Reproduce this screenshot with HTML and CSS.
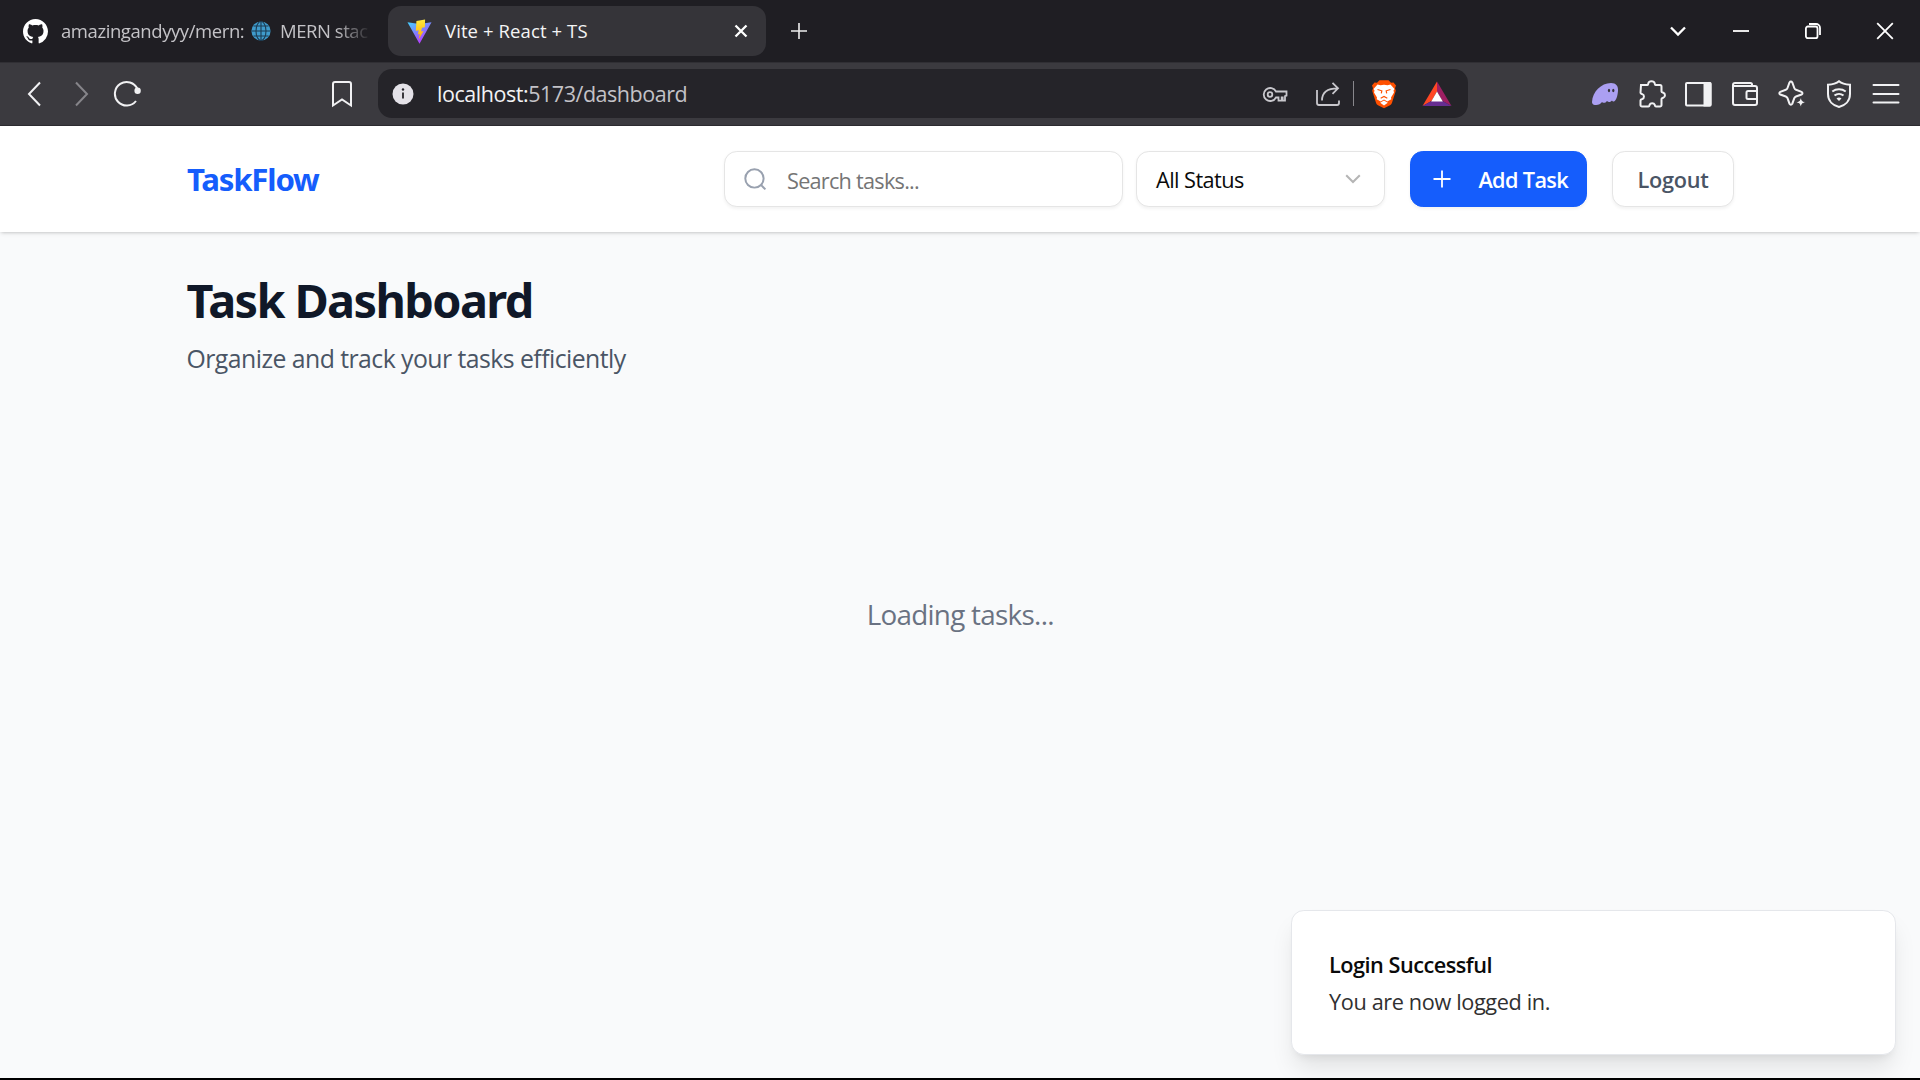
FILE: index.html
```html
<!DOCTYPE html>
<html lang="en">
<head>
<meta charset="utf-8">
<title>Vite + React + TS</title>
<link rel="stylesheet" href="styles.css">
</head>
<body>
<div class="tabs">
  <div class="tab">
    <svg class="tab-icon" viewBox="0 0 16 16"><path fill="#fff" d="M8 0C3.58 0 0 3.58 0 8c0 3.54 2.29 6.53 5.47 7.59.4.07.55-.17.55-.38 0-.19-.01-.82-.01-1.49-2.01.37-2.53-.49-2.69-.94-.09-.23-.48-.94-.82-1.13-.28-.15-.68-.52-.01-.53.63-.01 1.08.58 1.23.82.72 1.21 1.87.87 2.33.66.07-.52.28-.87.51-1.07-1.78-.2-3.64-.89-3.64-3.95 0-.87.31-1.59.82-2.15-.08-.2-.36-1.02.08-2.12 0 0 .67-.21 2.2.82.64-.18 1.32-.27 2-.27s1.36.09 2 .27c1.53-1.04 2.2-.82 2.2-.82.44 1.1.16 1.92.08 2.12.51.56.82 1.27.82 2.15 0 3.07-1.87 3.75-3.65 3.95.29.25.54.73.54 1.48 0 1.07-.01 1.93-.01 2.2 0 .21.15.46.55.38A8.01 8.01 0 0 0 16 8c0-4.42-3.58-8-8-8z"/></svg>
    <div class="tab-title faded"><span class="repo">amazingandyyy/mern:</span>
      <svg class="globe" viewBox="0 0 20 20"><circle cx="10" cy="10" r="9.6" fill="#3f9bcb"/><g fill="none" stroke="#1c3b52" stroke-width="1.1"><path d="M10 .5v19M.5 10h19M2.5 5h15M2.5 15h15"/><ellipse cx="10" cy="10" rx="5" ry="9.5"/></g></svg>
      <span class="mern">MERN stac</span></div>
  </div>
  <div class="tab active">
    <svg class="tab-icon" viewBox="0 0 26 26">
      <defs><linearGradient id="va" x1="0" y1="0" x2=".6" y2="1"><stop offset="0" stop-color="#41d1ff"/><stop offset="1" stop-color="#bd34fe"/></linearGradient><linearGradient id="vb" x1="0" y1="0" x2="0" y2="1"><stop offset="0" stop-color="#ffea3d"/><stop offset="1" stop-color="#ffa800"/></linearGradient></defs>
      <path fill="url(#va)" d="M.5 3.5 13 5.3l12.5-1.8L13 25.7z"/><path fill="url(#vb)" d="M18.8.6 9.8 2.2 9.2 12.5l3-.7-.9 4.4 2-.6-1.2 5.8 5.2-9-2.7.6 1-3.8 3-.7z"/></svg>
    <div class="tab-title vite">Vite + React + TS</div>
    <svg class="tab-close" viewBox="0 0 14 14"><path d="M1.5 1.5l11 11m0-11l-11 11" stroke="#fff" stroke-width="2.3"/></svg>
  </div>
  <svg class="new-tab" viewBox="0 0 18 18"><path d="M9 1v16M1 9h16" stroke="#eee" stroke-width="1.6"/></svg>
  <div class="window-buttons">
    <svg viewBox="0 0 18 18"><path d="M2 5.5 9 12.500l7-7" stroke-width="2.3"/></svg>
    <svg viewBox="0 0 18 18"><path d="M1 9h16" stroke-width="1.8"/></svg>
    <svg viewBox="0 0 18 18"><rect x="1.900" y="4.500" width="11.600" height="11.700" rx="2"/><path d="M5 2h7a4 4 0 0 1 4 4v7"/></svg>
    <svg viewBox="0 0 18 18"><path d="M1.200 1.200l15.600 15.600m0-15.600L1.200 16.800"/></svg>
  </div>
</div>

<div class="toolbar">
  <svg class="tool back" viewBox="0 0 28 28"><path d="M20 2.500 9 14l11 11.500"/></svg>
  <svg class="tool forward" viewBox="0 0 28 28"><path d="M8 2.500 19 14 8 25.500"/></svg>
  <svg class="tool reload" viewBox="0 0 28 28"><path d="M23 21A11.800 11.800 0 1 1 24.500 9"/><circle cx="24.600" cy="10.800" r="3.200" fill="#f1f1f3" stroke="none"/></svg>
  <svg class="tool bookmark" viewBox="0 0 28 28"><path d="M5 4a2 2 0 0 1 2-2h14a2 2 0 0 1 2 2v21.500l-9-6-9 6z"/></svg>
  <div class="url">
    <svg class="info" viewBox="0 0 22 22"><circle cx="11" cy="11" r="10.500" fill="#e4e2e8"/><path d="M11 9.500v6" stroke="#252429" stroke-width="1.800"/><circle cx="11" cy="6.500" r="1.200" fill="#252429"/></svg>
    <div class="address"><span class="host">localhost:</span><span class="path">5173/dashboard</span></div>
    <svg class="key" viewBox="0 0 26 26"><path d="M14 10.500A6.500 6.500 0 1 0 14 16.500h2.500v3.200h3.200v-3.200h1v3.200H23v-4.500l1.500-.5v-4.200z"/><circle cx="8" cy="13.500" r="2.300"/></svg>
    <svg class="share" viewBox="0 0 26 26"><path d="M2 9v13a2 2 0 0 0 2 2h18a2 2 0 0 0 2-2v-2.500M7 19.500C7 11.500 12 7.300 22.500 7.300M17.500 1.800 23 7.300l-5.500 5.500"/></svg>
    <span class="divider"></span>
    <svg class="brave" viewBox="0 0 26 30"><path fill="#ff5000" d="M8.500 1.200h9L20 3.800l2.500-.3 2.500 3-1 2.800.8 2.400-3.800 12c-.4 1.200-1 1.800-2 2.500L13 29.200l-6-3c-1-.7-1.600-1.300-2-2.500l-3.800-12L2 9.300 1 6.500l2.500-3 2.500.3z"/><path fill="#fff" d="m6.500 5.500 3 .8 3.500-.6 3.500.6 3-.8 4 4.500-1 1.500.5 2-3 5 .3 1.700-4 2.300L13 20.500l-3.300 2L5.700 20.200 6 18.500l-3-5 .5-2-1-1.500z"/><path fill="#fff" d="m13 21.500 3.800 2.200L13 26.500l-3.800-2.800z"/><path d="M6.500 10.500l4.300 1.300-.5 2.500M19.500 10.500l-4.300 1.300.5 2.500M9.700 19.300l3.300-1.800 3.300 1.800" fill="none" stroke="#ff5000" stroke-width="1.200"/></svg>
    <svg class="bat" viewBox="0 0 30 26"><path fill="#ff4724" d="M15 .5v10L9.500 20 .500 25z"/><path fill="#9e1f63" d="m15 .5 14.500 24.500-9-5L15 10.500z"/><path fill="#662d91" d="M.5 25l9-5h11l9 5z"/><path fill="#fff" d="m15 10.500 5.800 10H9.200z"/></svg>
  </div>
  <div class="extensions">
    <svg viewBox="0 0 28 28"><path fill="#ab9ff2" stroke="none" d="M1 22C1.500 12 10 3 20 3c5 0 7.500 3 7 8-.4 5-2 10-4 10.500-1 .3-1.500-.4-2-1-1 1.500-3.500 2.300-5 .5-1.500 2-3.500 2.500-5 1-1.500 2-4 3.500-7 3-2-.2-3.100-1.500-3-3z"/><ellipse cx="18" cy="10.500" rx="1.100" ry="1.800" fill="#35343a" stroke="none"/><ellipse cx="22.300" cy="10.500" rx="1.100" ry="1.800" fill="#35343a" stroke="none"/></svg>
    <svg viewBox="0 0 28 28"><path d="M3 5h6.500c.8 0 .6-1 .9-2 .7-2.500 5.500-2.500 6.200 0 .3 1 .1 2 .9 2H22a1.500 1.500 0 0 1 1.500 1.500v5c0 1 1 .9 1.800 1.200 2.200.8 2.200 4.300 0 5-.8.400-1.800.2-1.800 1.300v6A1.500 1.500 0 0 1 22 26.500h-4c-1.200 0-1-.9-1.300-1.800-.8-2-4.300-2-5 0-.3.900-.2 1.800-1.300 1.800H4A1.500 1.500 0 0 1 2.500 25v-4.500c0-1.200 1-1.100 1.800-1.400 2.200-.8 2.200-4.200 0-5-.8-.3-1.800-.2-1.800-1.300z"/></svg>
    <svg viewBox="0 0 28 28"><rect x="2" y="3" width="24.500" height="22.500" rx="1"/><path fill="#f1f1f3" stroke="none" d="M19.500 2H26a1.500 1.500 0 0 1 1.500 1.500V25a1.500 1.500 0 0 1-1.500 1.500h-6.500z"/></svg>
    <svg viewBox="0 0 28 28"><path d="M21 6V4.500A1.500 1.500 0 0 0 19.500 3H4a2 2 0 0 0-2 2v18a2 2 0 0 0 2 2h20a2 2 0 0 0 2-2V8a2 2 0 0 0-2-2H2.500M26 11h-9a1.500 1.500 0 0 0-1.500 1.500v5A1.500 1.500 0 0 0 17 19h9"/></svg>
    <svg viewBox="0 0 28 28"><path d="M11.500 2.500c.8-1.300 2-1.300 2.800 0l2 5.500c.3.900.9 1.500 1.700 1.800l5.500 2c1.300.7 1.300 2 0 2.700l-5.500 2c-.8.300-1.400.9-1.700 1.700l-2 5.500c-.8 1.300-2 1.300-2.800 0l-2-5.500c-.3-.8-.9-1.400-1.700-1.700l-5.500-2c-1.300-.7-1.300-2 0-2.700l5.500-2c.8-.3 1.400-.9 1.700-1.800z"/><path fill="#f1f1f3" stroke="#3b3a3f" stroke-width="1" d="m22.800 17 1.500 3.800 3.500 1.500-3.500 1.500-1.500 3.800-1.500-3.800-3.800-1.500 3.800-1.500z"/></svg>
    <svg viewBox="0 0 28 28"><path d="M14 1.200C11 3.800 7 4.500 3 4.700V14c0 7 5 11.500 11 13 6-1.500 11-6 11-13V4.700C21 4.500 17 3.800 14 1.200z"/><path d="M7.300 11.500a11 11 0 0 1 13.400 0M9.500 15.500a7.200 7.200 0 0 1 9 0"/><path d="M11.500 18.500q2.500-2 5 0L14 21z" fill="#f1f1f3" stroke="none"/></svg>
    <svg viewBox="0 0 28 28"><path d="M1.500 5h25M1.500 14h25M1.500 22.500h25" stroke-linecap="round"/></svg>
  </div>
</div>

<header class="header">
  <div class="brand"><span>TaskFlow</span></div>
  <div class="search box">
    <svg viewBox="0 0 24 24"><circle cx="11" cy="11" r="8.800"/><path d="m21.500 21.500-4.300-4.300"/></svg>
    <span>Search tasks...</span>
  </div>
  <div class="select box">
    <span>All Status</span>
    <svg viewBox="0 0 16 10"><path d="m1.200 1.200 6.800 6.800 6.800-6.800"/></svg>
  </div>
  <div class="add box">
    <svg viewBox="0 0 18 18"><path d="M9 .5v17M.5 9h17"/></svg>
    <span>Add Task</span>
  </div>
  <div class="logout box"><span>Logout</span></div>
</header>

<main class="main">
  <h1><span>Task Dashboard</span></h1>
  <p class="subtitle"><span>Organize and track your tasks efficiently</span></p>
  <p class="loading"><span>Loading tasks...</span></p>
</main>

<div class="toast">
  <div class="toast-title"><span>Login Successful</span></div>
  <div class="toast-text"><span>You are now logged in.</span></div>
</div>
</body>
</html>
```
FILE: styles.css
```css
* { box-sizing: border-box; }
body {
  margin: 0;
  width: 1920px;
  height: 1080px;
  overflow: hidden;
  display: flex;
  flex-direction: column;
  background: #f9fafb;
  border-bottom: 2px solid #000;
  font-family: "Open Sans", "Noto Sans", sans-serif;
  font-size: 21.7px;
  position: relative;
}
svg { display: block; flex: none; }
span { white-space: nowrap; }
h1, p { margin: 0; }

.tabs {
  flex: none;
  height: 62px;
  display: flex;
  align-items: center;
  background: #1f1e23;
  color: #c4c3c7;
  font-size: 18.5px;
}
.tab {
  width: 388px;
  height: 50px;
  display: flex;
  align-items: center;
  padding-left: 23px;
}
.tab.active {
  width: 378px;
  padding: 0 18px 0 19px;
  background: #353439;
  border-radius: 13px;
  color: #f4f4f5;
}
.tab-icon { width: 25px; height: 25px; }
.tab-title {
  display: flex;
  align-items: center;
  margin-left: 13px;
  padding-bottom: 1px;
  line-height: 26px;
  white-space: nowrap;
}
.faded {
  width: 308px;
  -webkit-mask-image: linear-gradient(to right, #000 275px, transparent 310px);
  mask-image: linear-gradient(to right, #000 275px, transparent 310px);
}
.repo { width: 182px; letter-spacing: -0.42px; }
.globe { width: 20px; height: 20px; margin: 0 9px 0 8px; }
.mern { letter-spacing: -0.45px; }
.vite { letter-spacing: 0.1px; }
.tab-close { width: 14px; height: 14px; margin-left: auto; }
.new-tab { width: 18px; height: 18px; margin-left: 24px; }
.window-buttons {
  margin-left: auto;
  padding-right: 26px;
  display: flex;
  gap: 54px;
}
.window-buttons svg { width: 18px; height: 18px; fill: none; stroke: #fff; stroke-width: 1.8; }
.window-buttons svg:first-child { margin-right: -9px; }

.toolbar {
  flex: none;
  height: 64px;
  display: flex;
  align-items: center;
  padding: 0 20.5px 1px 20px;
  background: #3b3a3f;
  border-top: 1px solid #302f34;
  border-bottom: 1px solid #2d2c31;
}
.tool, .extensions svg {
  width: 28px;
  height: 28px;
  fill: none;
  stroke: #f1f1f3;
  stroke-width: 2;
}
.forward { margin-left: 20px; stroke: #86858a; }
.reload { margin-left: 17px; }
.bookmark { margin-left: 186.5px; margin-right: .5px; }
.url {
  width: 1090px;
  height: 49px;
  margin-left: 22px;
  padding-left: 14px;
  display: flex;
  align-items: center;
  background: #252429;
  border-radius: 14px;
}
.info { width: 22px; height: 22px; margin-right: 23px; }
.address { width: 825px; line-height: 30px; font-size: 21.5px; color: #c3c2c7; }
.host { color: #f2f2f4; letter-spacing: -0.45px; }
.path { letter-spacing: -0.47px; }
.key, .share { width: 26px; height: 26px; fill: none; stroke: #c8c7cc; stroke-width: 1.8; }
.share { margin-left: 27px; }
.divider { width: 1px; height: 25px; margin: 0 17px 0 12px; background: #88878c; }
.brave { width: 26px; height: 30px; }
.bat { width: 30px; height: 26px; margin-left: 25px; }
.extensions { margin-left: auto; display: flex; gap: 18.8px; }

.header {
  flex: none;
  height: 106px;
  display: flex;
  align-items: center;
  padding: 0 186px 0 187px;
  background: #fff;
  box-shadow: 0 1.6px 4.8px rgba(0, 0, 0, .1), 0 1.6px 3.2px -1.6px rgba(0, 0, 0, .2);
}
.brand {
  margin-right: auto;
  color: #155dfc;
  font-family: "Noto Sans", sans-serif;
  font-size: 31.2px;
  font-weight: 700;
  line-height: 44px;
  letter-spacing: -1.2px;
}
.box {
  height: 56px;
  display: flex;
  align-items: center;
  border: 1px solid #e5e5e5;
  border-radius: 12.8px;
  background: #fff;
  box-shadow: 0 1.6px 3.2px rgba(0, 0, 0, .05);
}
.box svg { fill: none; }
.search { width: 399px; padding-left: 18px; color: #757575; }
.search svg { width: 25px; height: 25px; stroke: #99a1af; stroke-width: 1.9; margin-right: 19px; }
.search span { padding-top: 2px; letter-spacing: -0.75px; }
.select { width: 249px; margin-left: 13px; padding: 0 23px 0 19px; justify-content: space-between; color: #0a0a0a; }
.select svg { width: 16px; height: 10px; stroke: #b5b5b5; stroke-width: 2; }
.select span { letter-spacing: -0.55px; }
.add { width: 177px; margin-left: 25px; padding: 0 18px 0 22px; justify-content: space-between; background: #155dfc; border-color: #155dfc; color: #fff; font-weight: 600; }
.add svg { width: 18px; height: 18px; stroke: #fff; stroke-width: 1.8; }
.add span { letter-spacing: -0.65px; }
.logout { width: 122px; margin-left: 25px; justify-content: center; color: #4a5565; font-weight: 600; }
.logout span { letter-spacing: -0.3px; }
.select span, .add span, .logout span { padding-top: 1px; }

.main { flex: 1; padding: 36px 186px 0 186.5px; }
h1 { font-family: "Noto Sans", sans-serif; font-size: 46.8px; font-weight: 700; line-height: 64px; color: #101828; letter-spacing: -1.6px; }
.subtitle { margin-top: 7px; font-size: 24.8px; line-height: 38px; color: #4a5565; letter-spacing: -0.54px; }
.loading { margin-top: 214px; font-size: 27.8px; line-height: 46px; color: #6a7282; text-align: center; letter-spacing: -0.7px; }

.toast {
  position: absolute;
  right: 24px;
  bottom: 23px;
  width: 605px;
  height: 145px;
  padding: 36px 38px 36px 37px;
  border: 1px solid #e5e7eb;
  border-radius: 12.8px;
  background: #fff;
  color: #0a0a0a;
  box-shadow: 0 16px 24px -4.8px rgba(0, 0, 0, .1), 0 6.4px 9.6px -6.4px rgba(0, 0, 0, .1);
}
.toast-title { font-weight: 600; line-height: 36px; letter-spacing: -0.5px; }
.toast-text { line-height: 36px; margin-top: 1px; color: #303030; letter-spacing: -0.37px; }
```
